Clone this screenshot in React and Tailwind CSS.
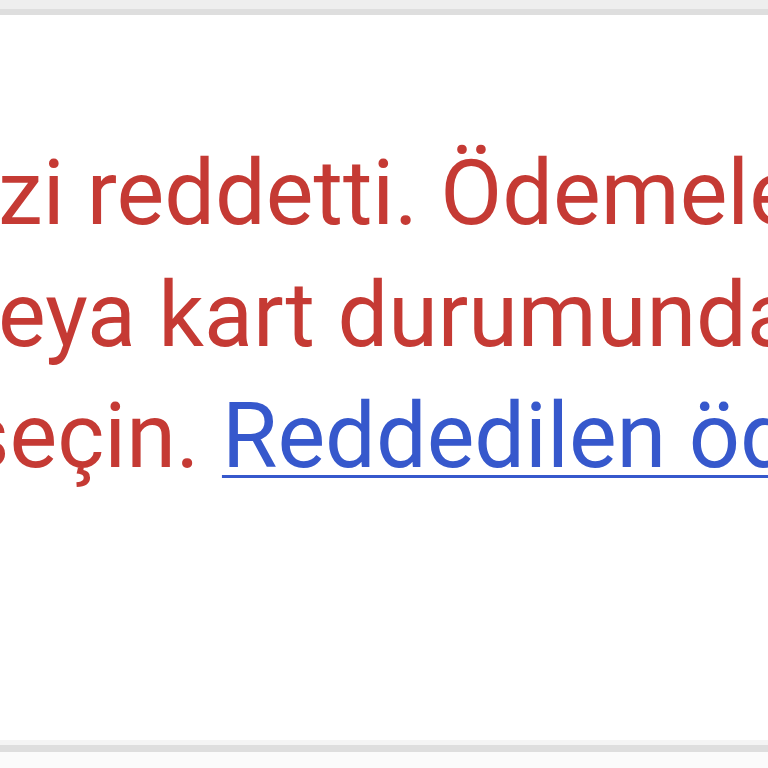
export default function App() {
  return (
    <div className="w-[768px] h-[768px] overflow-hidden bg-white flex flex-col">
      <div className="h-[9px] bg-[#eeeeee] shrink-0" />
      <div className="h-[6px] bg-[#dedede] shrink-0" />
      <div className="flex-1 bg-white overflow-hidden pt-[118px] font-['Roboto',sans-serif] text-[90px] leading-[121.5px] text-[#c53a34]">
        <div className="whitespace-nowrap ml-[-2px]">zi reddetti. Ödemeleri</div>
        <div className="whitespace-nowrap ml-[-2px]">eya kart durumunda</div>
        <div className="whitespace-nowrap ml-[-37px]">seçin. <span className="text-[#3658cc] underline decoration-[3px] underline-offset-[8px]">Reddedilen ödemeler</span></div>
      </div>
      <div className="h-[5px] bg-[#f4f4f4] shrink-0" />
      <div className="h-[7px] bg-[#dedede] shrink-0" />
      <div className="h-[16px] bg-[#fbfbfb] shrink-0" />
    </div>
  );
}
